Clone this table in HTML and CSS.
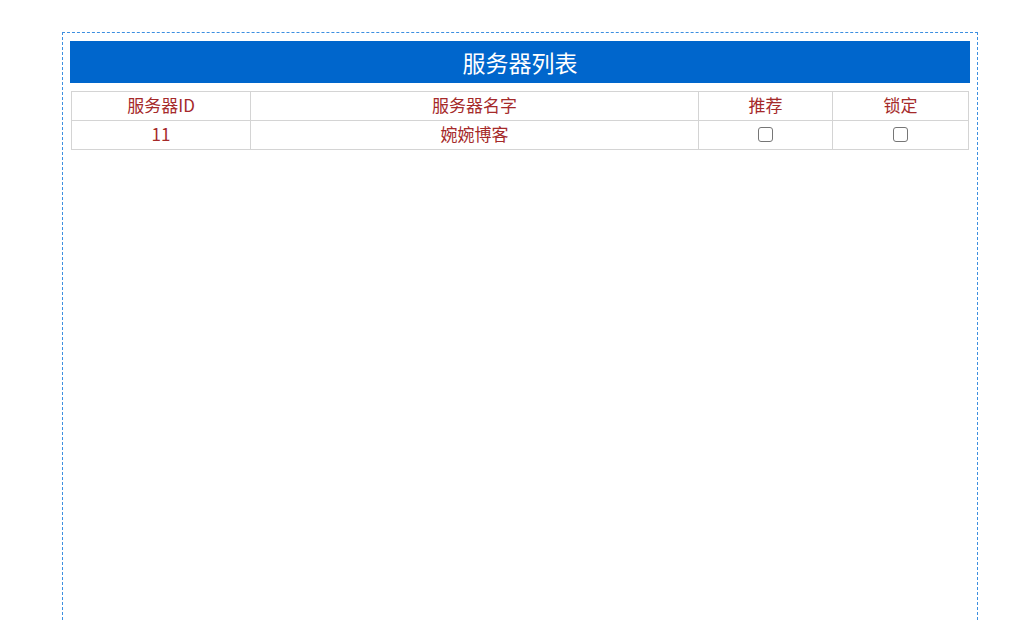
FILE: index.html
```html
<!DOCTYPE html>
<html lang="zh-CN">
<head>
<meta charset="utf-8">
<title>服务器列表</title>
<link rel="stylesheet" href="styles.css">
</head>
<body>
<div class="panel">
  <div class="title">服务器列表</div>
  <table class="list">
    <colgroup>
      <col class="c-id"><col class="c-name"><col class="c-rec"><col class="c-lock">
    </colgroup>
    <thead>
      <tr><th>服务器ID</th><th>服务器名字</th><th>推荐</th><th>锁定</th></tr>
    </thead>
    <tbody>
      <tr><td>11</td><td>婉婉博客</td><td><span class="box"></span></td><td><span class="box"></span></td></tr>
    </tbody>
  </table>
</div>
</body>
</html>
```
FILE: styles.css
```css
html, body {
  margin: 0;
  padding: 0;
  background: #fff;
  font-family: "Noto Sans CJK SC", "Noto Sans", sans-serif;
}
body {
  padding: 32px 0 0 62px;
  height: 620px;
  box-sizing: border-box;
  overflow: hidden;
}
.panel {
  width: 916px;
  height: 588px;
  box-sizing: border-box;
  border: 1px dashed #3d8fe0;
  border-bottom: none;
  padding: 8px 7px;
}
.title {
  height: 42px;
  background: #0066cc;
  color: #fff;
  font-size: 23px;
  line-height: 42px;
  text-align: center;
}
.list {
  margin: 8px 0 0 1px;
  width: 897px;
  border-collapse: collapse;
  table-layout: fixed;
}
.c-id { width: 179px; }
.c-name { width: 448px; }
.c-rec { width: 134px; }
.c-lock { width: 136px; }
.list th, .list td {
  border: 1px solid #d4d4d4;
  height: 28px;
  padding: 0;
  vertical-align: top;
  text-align: center;
  font-weight: normal;
  font-size: 17px;
  line-height: 26px;
  color: #a52a2a;
}
.box {
  display: inline-block;
  width: 13px;
  height: 13px;
  border: 1px solid #767676;
  border-radius: 3px;
  vertical-align: middle;
  margin-top: -3px;
  background: #fff;
}
```
